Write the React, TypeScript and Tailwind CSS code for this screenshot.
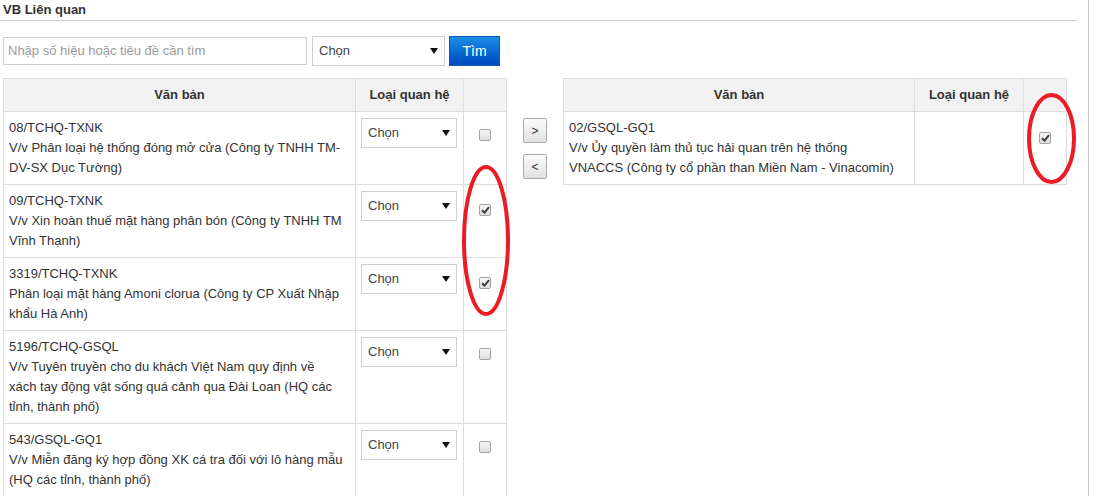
import React from "react";

type Row = { code: string; lines: string[]; checked: boolean };

const leftRows: Row[] = [
  { code: "08/TCHQ-TXNK", lines: ["V/v Phân loại hệ thống đóng mở cửa (Công ty TNHH TM-", "DV-SX Dục Tường)"], checked: false },
  { code: "09/TCHQ-TXNK", lines: ["V/v Xin hoàn thuế mặt hàng phân bón (Công ty TNHH TM", "Vĩnh Thạnh)"], checked: true },
  { code: "3319/TCHQ-TXNK", lines: ["Phân loại mặt hàng Amoni clorua (Công ty CP Xuất Nhập", "khẩu Hà Anh)"], checked: true },
  {
    code: "5196/TCHQ-GSQL",
    lines: ["V/v Tuyên truyền cho du khách Việt Nam quy định về", "xách tay động vật sống quá cảnh qua Đài Loan (HQ các", "tỉnh, thành phố)"],
    checked: false,
  },
  { code: "543/GSQL-GQ1", lines: ["V/v Miễn đăng ký hợp đồng XK cá tra đối với lô hàng mẫu", "(HQ các tỉnh, thành phố)"], checked: false },
];

function Caret() {
  return (
    <svg width="8" height="6" viewBox="0 0 8 6" className="shrink-0">
      <polygon points="0,0 8,0 4,6" fill="#111" />
    </svg>
  );
}

function FakeSelect({ w, h }: { w: string; h: string }) {
  return (
    <div className={`${w} ${h} flex items-center justify-between border border-[#cfcfcf] bg-white pl-[6px] pr-[6px] text-[13px] text-[#444]`}>
      <span>Chọn</span>
      <Caret />
    </div>
  );
}

function Check({ checked }: { checked: boolean }) {
  return (
    <span className="inline-flex h-[12px] w-[12px] items-center justify-center rounded-[2px] border border-[#a3a3a3] bg-gradient-to-b from-[#f7f7f7] to-[#dedede]">
      {checked && (
        <svg width="9" height="8" viewBox="0 0 9 8">
          <path d="M1 4.2 L3.5 6.6 L8 1.2" stroke="#3a3a3a" strokeWidth="2" fill="none" />
        </svg>
      )}
    </span>
  );
}

function HeaderRow() {
  return (
    <thead>
      <tr className="bg-[#f2f2f2]">
        <th className="border border-[#dddddd] py-[6px] text-center text-[13px] font-bold leading-[20px] text-[#333]">Văn bản</th>
        <th className="border border-[#dddddd] py-[6px] text-center text-[13px] font-bold leading-[20px] text-[#333]">Loại quan hệ</th>
        <th className="border border-[#dddddd] py-[6px]"></th>
      </tr>
    </thead>
  );
}

export default function App() {
  return (
    <div
      className="relative h-[496px] w-[1089px] overflow-hidden border-r border-[#c8c8c8] bg-white text-[#333]"
      style={{ fontFamily: '"Liberation Sans", Arial, sans-serif' }}
    >
      <div className="mr-[11px] h-[21px] border-b border-[#cccccc] pl-[3px] pt-[1px] text-[13px] font-bold leading-[18px] text-[#333]">
        VB Liên quan
      </div>

      <div className="mt-[15px] flex items-center pl-[3px]">
        <div className="flex h-[28px] w-[304px] items-center border border-[#cfcfcf] pl-[4px] text-[13px] text-[#9a9a9a]">
          Nhập số hiệu hoặc tiêu đề cần tìm
        </div>
        <div className="ml-[5px]">
          <FakeSelect w="w-[133px]" h="h-[30px]" />
        </div>
        <button className="ml-[4px] h-[30px] w-[51px] border border-[#0b5cb8] bg-gradient-to-b from-[#1f8ce6] to-[#0049bd] text-[14px] text-white">
          Tìm
        </button>
      </div>

      <div className="mt-[12px] flex items-start pl-[3px]">
        <table className="w-[503px] table-fixed border-collapse">
          <colgroup>
            <col className="w-[352px]" />
            <col className="w-[108px]" />
            <col className="w-[43px]" />
          </colgroup>
          <HeaderRow />
          <tbody>
            {leftRows.map((r) => (
              <tr key={r.code}>
                <td className="border border-[#dddddd] px-[5px] py-[6px] align-top text-[13px] leading-[20px] whitespace-nowrap text-[#333]">
                  <div>{r.code}</div>
                  {r.lines.map((l) => (
                    <div key={l}>{l}</div>
                  ))}
                </td>
                <td className="border border-[#dddddd] px-[5px] py-[6px] align-top">
                  <FakeSelect w="w-[96px]" h="h-[30px]" />
                </td>
                <td className="border border-[#dddddd] pt-[12px] text-center align-top">
                  <Check checked={r.checked} />
                </td>
              </tr>
            ))}
          </tbody>
        </table>

        <div className="ml-[16px] mt-[40px] flex flex-col gap-[11px]">
          <button className="flex h-[25px] w-[24px] items-center justify-center rounded-[2px] border border-[#aaaaaa] bg-gradient-to-b from-[#fbfbfb] to-[#e2e2e2] text-[12px] text-[#333]">
            &gt;
          </button>
          <button className="flex h-[25px] w-[24px] items-center justify-center rounded-[2px] border border-[#aaaaaa] bg-gradient-to-b from-[#fbfbfb] to-[#e2e2e2] text-[12px] text-[#333]">
            &lt;
          </button>
        </div>

        <table className="ml-[16px] w-[503px] table-fixed border-collapse">
          <colgroup>
            <col className="w-[351px]" />
            <col className="w-[109px]" />
            <col className="w-[43px]" />
          </colgroup>
          <HeaderRow />
          <tbody>
            <tr>
              <td className="border border-[#dddddd] px-[5px] py-[6px] align-top text-[13px] leading-[20px] whitespace-nowrap text-[#333]">
                <div>02/GSQL-GQ1</div>
                <div>V/v Ủy quyền làm thủ tục hải quan trên hệ thống</div>
                <div>VNACCS (Công ty cổ phần than Miền Nam - Vinacomin)</div>
              </td>
              <td className="border border-[#dddddd]"></td>
              <td className="border border-[#dddddd] pt-[13px] text-center align-top">
                <Check checked />
              </td>
            </tr>
          </tbody>
        </table>
      </div>

      <svg className="pointer-events-none absolute left-0 top-0" width="1095" height="496">
        <ellipse cx="486" cy="240.5" rx="22" ry="73.5" fill="none" stroke="#ec1c24" strokeWidth="4" />
        <ellipse cx="1051.5" cy="138.5" rx="22.5" ry="43.5" fill="none" stroke="#ec1c24" strokeWidth="4" />
      </svg>
    </div>
  );
}
